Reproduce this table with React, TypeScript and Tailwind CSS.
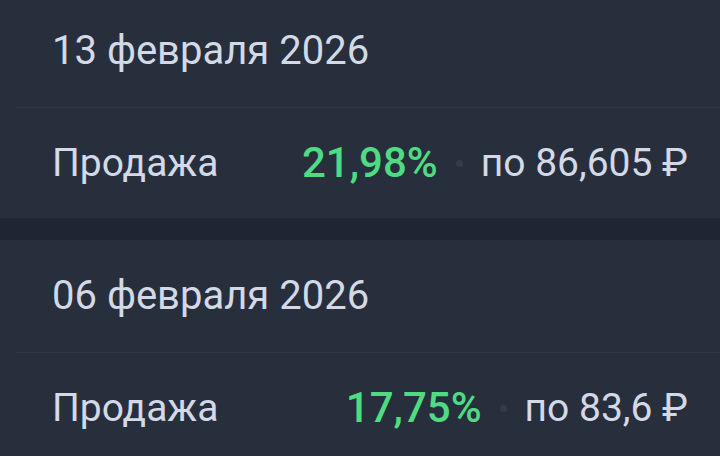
import { Fragment } from "react";

const deals = [
  { date: "13 февраля 2026", type: "Продажа", yieldPct: "21,98%", price: "по 86,605 ₽" },
  { date: "06 февраля 2026", type: "Продажа", yieldPct: "17,75%", price: "по 83,6 ₽" },
];

const DealCard = ({ deal }: { deal: (typeof deals)[number] }) => (
  <div className="bg-[#272f3d]">
    <div className="h-[112px] flex items-center pl-[52px] text-[40px] leading-none text-[#d3d9e6]">
      {deal.date}
    </div>
    <div className="ml-[15px] h-px bg-[#2f3847]" />
    <div className="h-[110px] flex items-center pl-[52px] pr-[32px] leading-none">
      <span className="text-[39px] text-[#d3d9e6]">{deal.type}</span>
      <div className="ml-auto flex items-center">
        <span className="text-[42px] font-medium text-[#4fdb82]">{deal.yieldPct}</span>
        <span className="mx-[18px] w-[7px] h-[7px] rounded-full bg-[#333c4a]" />
        <span className="text-[39px] text-[#d3d9e6]">{deal.price}</span>
      </div>
    </div>
  </div>
);

export default function App() {
  return (
    <div
      className="w-[720px] h-[456px] overflow-hidden bg-[#1f2633]"
      style={{ fontFamily: "Roboto, 'Noto Sans', sans-serif" }}
    >
      <div className="-mt-[5px] flex flex-col gap-[22px]">
        {deals.map((deal) => (
          <Fragment key={deal.date}>
            <DealCard deal={deal} />
          </Fragment>
        ))}
      </div>
    </div>
  );
}
